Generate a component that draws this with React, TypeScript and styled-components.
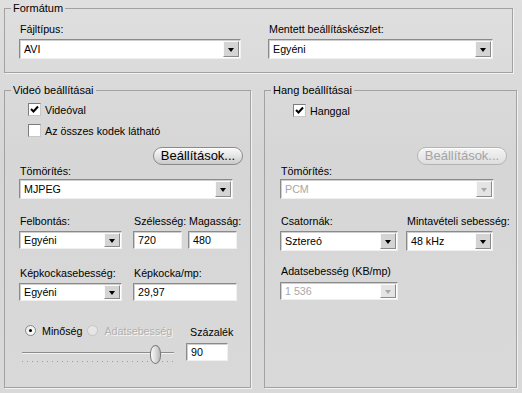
import styled, { createGlobalStyle } from 'styled-components';

const Global = createGlobalStyle`
	html, body {
		margin: 0;
		padding: 0;
		background: #d9d9d9;
	}
	body {
		font-family: 'Liberation Sans', Arial, sans-serif;
		font-size: 10.7px;
		color: #000;
	}
`;

const Window = styled.div`
	width: 522px;
	height: 393px;
	box-sizing: border-box;
	padding: 1px 0 0 4px;
	background: linear-gradient(#dfdfdf, #d6d6d6 40%, #d9d9d9);
	display: flex;
	flex-direction: column;
	overflow: hidden;
`;

const Group = styled.fieldset<{ $w: number; $h?: number }>`
	margin: 0;
	padding: 0;
	min-width: 0;
	width: ${(p) => p.$w}px;
	height: ${(p) => (p.$h ? `${p.$h}px` : 'auto')};
	box-sizing: border-box;
	border: 1px solid #a2a2a2;
	box-shadow: 1px 1px 0 #f2f2f2;
	legend {
		margin-left: 6px;
		padding: 0 2px;
		line-height: 14px;
		font-size: 11px;
	}
`;

const FormatBody = styled.div`
	display: flex;
	gap: 27px;
	padding: 7px 0 13px 14px;
`;

const Column = styled.div<{ $w: number }>`
	width: ${(p) => p.$w}px;
	display: flex;
	flex-direction: column;
`;

const Label = styled.label<{ $gap?: number; $disabled?: boolean }>`
	display: block;
	line-height: 14px;
	padding-left: 1px;
	margin-bottom: ${(p) => p.$gap ?? 3}px;
	white-space: nowrap;
	color: ${(p) => (p.$disabled ? '#a0a0a0' : '#000')};
`;

const BottomRow = styled.div`
	display: flex;
	gap: 13px;
	margin-top: 10px;
`;

const GroupBody = styled.div<{ $left: number }>`
	padding: 0 0 0 ${(p) => p.$left}px;
	display: flex;
	flex-direction: column;
`;

/* select */
const SelectBox = styled.div<{ $w: number; $h?: number; $mt?: number }>`
	width: ${(p) => p.$w}px;
	height: ${(p) => p.$h ?? 20}px;
	margin-top: ${(p) => p.$mt ?? 0}px;
	box-sizing: border-box;
	display: flex;
	align-items: stretch;
	background: #fff;
	border: 1px solid;
	border-color: #8a8a8a #f0f0f0 #f0f0f0 #8a8a8a;
	box-shadow: inset 1px 1px 0 #cfcfcf;
	padding: 1px 1px 1px 2px;
`;

const SelectText = styled.span<{ $disabled?: boolean }>`
	flex: 1;
	padding-left: 2px;
	display: flex;
	align-items: center;
	color: ${(p) => (p.$disabled ? '#a8a8a8' : '#000')};
`;

const DropButton = styled.span<{ $disabled?: boolean }>`
	width: 16px;
	box-sizing: border-box;
	background: ${(p) => (p.$disabled ? '#e4e4e4' : '#d4d4d4')};
	border: 1px solid;
	border-color: #fafafa #8a8a8a #8a8a8a #fafafa;
	display: flex;
	align-items: center;
	justify-content: center;
	&::after {
		content: '';
		border-left: 3.5px solid transparent;
		border-right: 3.5px solid transparent;
		border-top: 4px solid ${(p) => (p.$disabled ? '#a8a8a8' : '#000')};
		margin-top: 1px;
	}
`;

const Select = ({ value, w, h, mt, disabled }: { value: string; w: number; h?: number; mt?: number; disabled?: boolean }) => (
	<SelectBox $w={w} $h={h} $mt={mt}>
		<SelectText $disabled={disabled}>{value}</SelectText>
		<DropButton $disabled={disabled} />
	</SelectBox>
);

const Input = styled.div<{ $w: number; $h?: number }>`
	width: ${(p) => p.$w}px;
	height: ${(p) => p.$h ?? 18}px;
	box-sizing: border-box;
	background: #fff;
	border: 1px solid;
	border-color: #8a8a8a #f0f0f0 #f0f0f0 #8a8a8a;
	box-shadow: inset 1px 1px 0 #cfcfcf;
	padding-left: 4px;
	display: flex;
	align-items: center;
`;

/* checkbox */
const CheckRow = styled.div<{ $ml: number; $mt: number }>`
	display: flex;
	align-items: center;
	gap: 4px;
	height: 13px;
	margin: ${(p) => p.$mt}px 0 0 ${(p) => p.$ml}px;
`;

const CheckBox = styled.span`
	width: 13px;
	height: 13px;
	box-sizing: border-box;
	background: #fff;
	border: 1px solid;
	border-color: #7c7c7c #c8c8c8 #c8c8c8 #7c7c7c;
	display: flex;
	align-items: center;
	justify-content: center;
`;

const Check = ({ on }: { on?: boolean }) => (
	<CheckBox>
		{on && (
			<svg width="9" height="9" viewBox="0 0 9 9">
				<path d="M1 4 L3.5 6.5 L8 1.5" stroke="#000" strokeWidth="2" fill="none" />
			</svg>
		)}
	</CheckBox>
);

/* pill button */
const ButtonRow = styled.div<{ $mt: number }>`
	display: flex;
	justify-content: space-between;
	align-items: flex-end;
	height: 31px;
	margin-top: ${(p) => p.$mt}px;
	> label {
		margin-bottom: 0;
	}
`;

const PillButton = styled.button<{ $right: number }>`
	align-self: flex-start;
	width: 90px;
	height: 18px;
	margin-right: ${(p) => p.$right}px;
	padding: 0;
	border-radius: 9px;
	border: 1px solid ${(p) => (p.disabled ? '#b4b4b4' : '#8a8a8a')};
	background: ${(p) =>
		p.disabled ? 'linear-gradient(#f4f4f4, #dedede)' : 'linear-gradient(#fbfbfb, #e2e2e2 55%, #c9c9c9)'};
	box-shadow: inset 0 1px 0 #fff;
	font-family: 'Liberation Sans', Arial, sans-serif;
	font-size: 13px;
	line-height: 16px;
	color: ${(p) => (p.disabled ? '#a4a4a4' : '#000')};
`;

const FieldGrid = styled.div<{ $cols: string; $mt: number }>`
	display: grid;
	grid-template-columns: ${(p) => p.$cols};
	margin-top: ${(p) => p.$mt}px;
`;

const Cell = styled.div<{ $ml?: number }>`
	margin-left: ${(p) => p.$ml ?? 0}px;
	min-width: 0;
`;

/* quality section */
const QualityRow = styled.div`
	display: flex;
	margin-top: 24px;
`;

const QualityLeft = styled.div`
	width: 167px;
	display: flex;
	flex-direction: column;
`;

const RadioRow = styled.div`
	display: flex;
	align-items: center;
	height: 11px;
	margin-left: 6px;
	gap: 5px;
`;

const RadioItem = styled.span<{ $disabled?: boolean }>`
	display: flex;
	align-items: center;
	gap: 6px;
	color: ${(p) => (p.$disabled ? '#b0b0b0' : '#000')};
	text-shadow: ${(p) => (p.$disabled ? '1px 1px 0 #f6f6f6' : 'none')};
`;

const RadioDot = styled.span<{ $on?: boolean; $disabled?: boolean }>`
	width: 11px;
	height: 11px;
	box-sizing: border-box;
	border-radius: 50%;
	border: 1px solid ${(p) => (p.$disabled ? '#c4c4c4' : '#8a8a8a')};
	background: ${(p) => (p.$disabled ? '#e6e6e6' : 'linear-gradient(135deg, #e8e8e8, #ffffff)')};
	display: flex;
	align-items: center;
	justify-content: center;
	&::after {
		content: '';
		width: 3px;
		height: 3px;
		border-radius: 50%;
		background: ${(p) => (p.$on ? '#000' : 'transparent')};
	}
`;

const Slider = styled.div`
	position: relative;
	width: 152px;
	height: 20px;
	margin: 9px 0 0 3px;
`;

const Track = styled.div`
	margin-top: 7px;
	height: 1px;
	background: #8c8c8c;
	box-shadow: 0 1px 0 #f4f4f4;
`;

const Ticks = styled.div`
	margin-top: 8px;
	height: 1px;
	background: repeating-linear-gradient(to right, #9a9a9a 0 1px, transparent 1px 5px);
`;

const Thumb = styled.div<{ $pos: number }>`
	position: absolute;
	top: 0;
	left: ${(p) => p.$pos}px;
	width: 11px;
	height: 19px;
	box-sizing: border-box;
	border-radius: 6px / 9px;
	border: 1px solid #7a7a7a;
	background: linear-gradient(to right, #fafafa, #dcdcdc 50%, #b8b8b8);
`;

const QualityRight = styled.div`
	display: flex;
	flex-direction: column;
	> label {
		padding-left: 4px;
	}
`;

export default function App() {
	return (
		<>
			<Global />
			<Window>
				<Group $w={509}>
					<legend>Formátum</legend>
					<FormatBody>
						<Column $w={222}>
							<Label>Fájltípus:</Label>
							<Select value="AVI" w={222} />
						</Column>
						<Column $w={225}>
							<Label>Mentett beállításkészlet:</Label>
							<Select value="Egyéni" w={225} />
						</Column>
					</FormatBody>
				</Group>

				<BottomRow>
					<Group $w={247} $h={305}>
						<legend>Videó beállításai</legend>
						<GroupBody $left={14}>
							<CheckRow $ml={9} $mt={6}>
								<Check on />
								<span>Videóval</span>
							</CheckRow>
							<CheckRow $ml={9} $mt={8}>
								<Check />
								<span>Az összes kodek látható</span>
							</CheckRow>
							<ButtonRow $mt={10}>
								<Label>Tömörítés:</Label>
								<PillButton $right={7}>Beállítások...</PillButton>
							</ButtonRow>
							<Select value="MJPEG" w={214} mt={1} />

							<FieldGrid $cols="103px 60px 55px" $mt={15}>
								<Cell>
									<Label>Felbontás:</Label>
									<Select value="Egyéni" w={103} h={18} />
								</Cell>
								<Cell $ml={11}>
									<Label>Szélesség:</Label>
									<Input $w={49}>720</Input>
								</Cell>
								<Cell $ml={6}>
									<Label>Magasság:</Label>
									<Input $w={49}>480</Input>
								</Cell>
							</FieldGrid>

							<FieldGrid $cols="103px 115px" $mt={17}>
								<Cell>
									<Label>Képkockasebesség:</Label>
									<Select value="Egyéni" w={103} h={18} />
								</Cell>
								<Cell $ml={11}>
									<Label>Képkocka/mp:</Label>
									<Input $w={104}>29,97</Input>
								</Cell>
							</FieldGrid>

							<QualityRow>
								<QualityLeft>
									<RadioRow>
										<RadioItem>
											<RadioDot $on />
											Minőség
										</RadioItem>
										<RadioItem $disabled>
											<RadioDot $disabled />
											Adatsebesség
										</RadioItem>
									</RadioRow>
									<Slider>
										<Track />
										<Ticks />
										<Thumb $pos={128} />
									</Slider>
								</QualityLeft>
								<QualityRight>
									<Label $gap={4}>Százalék</Label>
									<Input $w={42}>90</Input>
								</QualityRight>
							</QualityRow>
						</GroupBody>
					</Group>

					<Group $w={253} $h={305}>
						<legend>Hang beállításai</legend>
						<GroupBody $left={15}>
							<CheckRow $ml={13} $mt={7}>
								<Check on />
								<span>Hanggal</span>
							</CheckRow>
							<ButtonRow $mt={30}>
								<Label>Tömörítés:</Label>
								<PillButton $right={9} disabled>
									Beállítások...
								</PillButton>
							</ButtonRow>
							<Select value="PCM" w={214} mt={1} disabled />

							<FieldGrid $cols="118px 95px" $mt={15}>
								<Cell>
									<Label>Csatornák:</Label>
									<Select value="Sztereó" w={118} />
								</Cell>
								<Cell $ml={8}>
									<Label>Mintavételi sebesség:</Label>
									<Select value="48 kHz" w={87} />
								</Cell>
							</FieldGrid>

							<Label style={{ marginTop: 13 }} $gap={4}>
								Adatsebesség (KB/mp)
							</Label>
							<Select value="1 536" w={118} h={18} disabled />
						</GroupBody>
					</Group>
				</BottomRow>
			</Window>
		</>
	);
}
